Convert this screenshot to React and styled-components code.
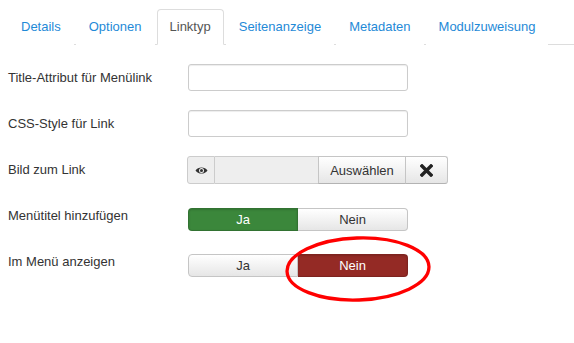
import React from 'react';
import styled, { createGlobalStyle } from 'styled-components';

const Global = createGlobalStyle`
body {
  margin: 0;
  background: #fff;
  font-family: "Liberation Sans", Arial, sans-serif;
  font-size: 13px;
  color: #333;
}
`

const Page = styled.div`
position: relative;
padding: 9px 0 0 8px;
height: 343px;
box-sizing: border-box;
`

const Tabs = styled.ul`
display: flex;
list-style: none;
margin: 0 0 19px 0;
padding: 0;
border-bottom: 1px solid #ddd;
`

const Tab = styled.li`
margin-right: 2px;
margin-bottom: -1px;
padding: 8px 12px;
line-height: 18px;
border: 1px solid ${p => p.active ? '#ddd' : 'transparent'};
border-bottom-color: ${p => p.active ? '#fff' : 'transparent'};
border-radius: 4px 4px 0 0;
background: #fff;
color: ${p => p.active ? '#555' : '#1f8ad7'};
cursor: pointer;
`

const Row = styled.div`
display: flex;
align-items: flex-start;
height: 28px;
margin-bottom: 18px;
`

const Label = styled.div`
width: 180px;
line-height: 28px;
`

const TextInput = styled.div`
width: 220px;
height: 27px;
box-sizing: border-box;
border: 1px solid #ccc;
border-radius: 3px;
box-shadow: inset 0 1px 1px rgba(0,0,0,0.075);
background: #fff;
`

const Group = styled.div`
display: flex;
height: 28px;
margin-left: -1px;
`

const AddOn = styled.div`
width: 28px;
box-sizing: border-box;
display: flex;
align-items: center;
justify-content: center;
background: #eee;
border: 1px solid #ccc;
border-radius: 3px 0 0 3px;
`

const ReadField = styled.div`
width: 103px;
box-sizing: border-box;
background: #eee;
border: 1px solid #ccc;
border-left: none;
border-right: none;
`

const Btn = styled.div`
width: ${p => p.w}px;
box-sizing: border-box;
display: flex;
align-items: center;
justify-content: center;
border: 1px solid #c5c5c5;
border-bottom-color: #b3b3b3;
border-left: ${p => p.first ? '1px solid #c5c5c5' : 'none'};
border-radius: ${p => p.last ? '0 3px 3px 0' : '0'};
background: linear-gradient(#fff, #e6e6e6);
color: #333;
font-size: 13px;
`

const Toggle = styled.div`
display: flex;
margin-top: 6px;
height: 23px;
`

const Choice = styled.div`
width: 110px;
box-sizing: border-box;
display: flex;
align-items: center;
justify-content: center;
color: ${p => p.on ? '#fff' : '#333'};
background: ${p => p.on ? p.color : 'linear-gradient(#fff, #e6e6e6)'};
border: 1px solid ${p => p.on ? 'rgba(0,0,0,0.15)' : '#c5c5c5'};
border-left-width: ${p => p.left ? '1px' : '0'};
border-radius: ${p => p.left ? '4px 0 0 4px' : '0 4px 4px 0'};
box-shadow: ${p => p.on ? 'inset 0 1px 2px rgba(0,0,0,0.15)' : 'none'};
`

const Marker = styled.svg`
position: absolute;
left: 284px;
top: 235px;
overflow: visible;
`

const Eye = () => (
  <svg width="13" height="9" viewBox="0 0 13 9">
    <path d="M0.5 4.5 C2.8 0.4 10.2 0.4 12.5 4.5 C10.2 8.6 2.8 8.6 0.5 4.5 Z" fill="#333" />
    <circle cx="6.5" cy="4.5" r="2.5" fill="#eee" />
    <circle cx="6.5" cy="4.5" r="1.5" fill="#333" />
  </svg>
)

const Cross = () => (
  <svg width="13" height="13" viewBox="0 0 13 13">
    <path d="M2 2 L11 11 M11 2 L2 11" stroke="#222" strokeWidth="3.4" strokeLinecap="square" />
  </svg>
)

const Switch = ({ value, color }) => (
  <Toggle>
    <Choice left on={value === 'ja'} color={color}>Ja</Choice>
    <Choice on={value === 'nein'} color={color}>Nein</Choice>
  </Toggle>
)

export default function App() {
  const tabs = ['Details', 'Optionen', 'Linktyp', 'Seitenanzeige', 'Metadaten', 'Modulzuweisung'];

  return <>
    <Global />
    <Page>
      <Tabs>
        {tabs.map(t => <Tab key={t} active={t === 'Linktyp'}>{t}</Tab>)}
      </Tabs>

      <Row>
        <Label>Title-Attribut für Menülink</Label>
        <TextInput />
      </Row>
      <Row>
        <Label>CSS-Style für Link</Label>
        <TextInput />
      </Row>
      <Row>
        <Label>Bild zum Link</Label>
        <Group>
          <AddOn><Eye /></AddOn>
          <ReadField />
          <Btn w={88} first>Auswählen</Btn>
          <Btn w={42} last><Cross /></Btn>
        </Group>
      </Row>
      <Row>
        <Label>Menütitel hinzufügen</Label>
        <Switch value="ja" color="#3b873b" />
      </Row>
      <Row>
        <Label>Im Menü anzeigen</Label>
        <Switch value="nein" color="#942a25" />
      </Row>

      <Marker width="148" height="68">
        <ellipse cx="74" cy="34" rx="71" ry="31" fill="none" stroke="#ff0000" strokeWidth="3.3" transform="rotate(-2 74 34)" />
      </Marker>
    </Page>
  </>
}
